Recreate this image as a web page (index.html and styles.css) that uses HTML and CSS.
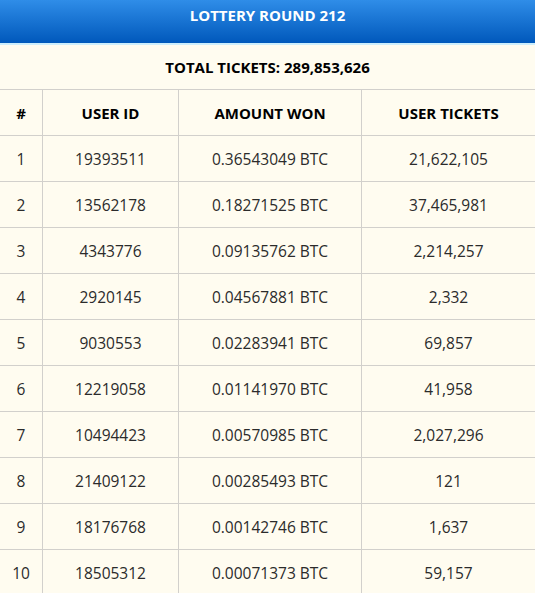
FILE: index.html
```html
<!DOCTYPE html>
<html>
<head>
  <meta charset="UTF-8">
  <title>Lottery Round 212</title>
  <link rel="stylesheet" href="styles.css">
</head>
<body>
<div class="lottery">
  <div class="round-header">LOTTERY ROUND 212</div>
  <div class="total">TOTAL TICKETS: 289,853,626</div>

  <table class="winners">
    <thead>
      <tr>
        <th class="col-rank">#</th>
        <th class="col-user">USER ID</th>
        <th class="col-amount">AMOUNT WON</th>
        <th>USER TICKETS</th>
      </tr>
    </thead>
    <tbody>
      <tr><td>1</td><td>19393511</td><td>0.36543049 BTC</td><td>21,622,105</td></tr>
      <tr><td>2</td><td>13562178</td><td>0.18271525 BTC</td><td>37,465,981</td></tr>
      <tr><td>3</td><td>4343776</td><td>0.09135762 BTC</td><td>2,214,257</td></tr>
      <tr><td>4</td><td>2920145</td><td>0.04567881 BTC</td><td>2,332</td></tr>
      <tr><td>5</td><td>9030553</td><td>0.02283941 BTC</td><td>69,857</td></tr>
      <tr><td>6</td><td>12219058</td><td>0.01141970 BTC</td><td>41,958</td></tr>
      <tr><td>7</td><td>10494423</td><td>0.00570985 BTC</td><td>2,027,296</td></tr>
      <tr><td>8</td><td>21409122</td><td>0.00285493 BTC</td><td>121</td></tr>
      <tr><td>9</td><td>18176768</td><td>0.00142746 BTC</td><td>1,637</td></tr>
      <tr><td>10</td><td>18505312</td><td>0.00071373 BTC</td><td>59,157</td></tr>
    </tbody>
  </table>
</div>
</body>
</html>
```

FILE: styles.css
```css
body {
  margin: 0;
  background-color: #fffcf0;
  font-family: "Open Sans", Arial, sans-serif;
  color: #2b2b2b;
}

.lottery {
  width: 535px;
}

.round-header {
  height: 45px;
  padding-top: 5px;
  box-sizing: border-box;
  background: linear-gradient(to bottom, #2f8de8, #0058bb);
  border-bottom: 2px solid #cdeefc;
  color: white;
  font-size: 15px;
  font-weight: bold;
  text-align: center;
  line-height: 20px;
}

.total {
  height: 44px;
  display: flex;
  align-items: center;
  justify-content: center;
  font-size: 15px;
  font-weight: bold;
  color: #000;
}

.winners {
  width: 100%;
  border-collapse: collapse;
  table-layout: fixed;
}

.winners th,
.winners td {
  height: 45px;
  padding: 0;
  text-align: center;
  border: 1px solid #d2d0cc;
  font-size: 15.5px;
}

.winners th:first-child,
.winners td:first-child {
  border-left: none;
}

.winners th:last-child,
.winners td:last-child {
  border-right: none;
}

.winners th {
  font-size: 15px;
  font-weight: bold;
  color: #000;
}

.col-rank {
  width: 42px;
}

.col-user {
  width: 135px;
}

.col-amount {
  width: 182px;
}
```
